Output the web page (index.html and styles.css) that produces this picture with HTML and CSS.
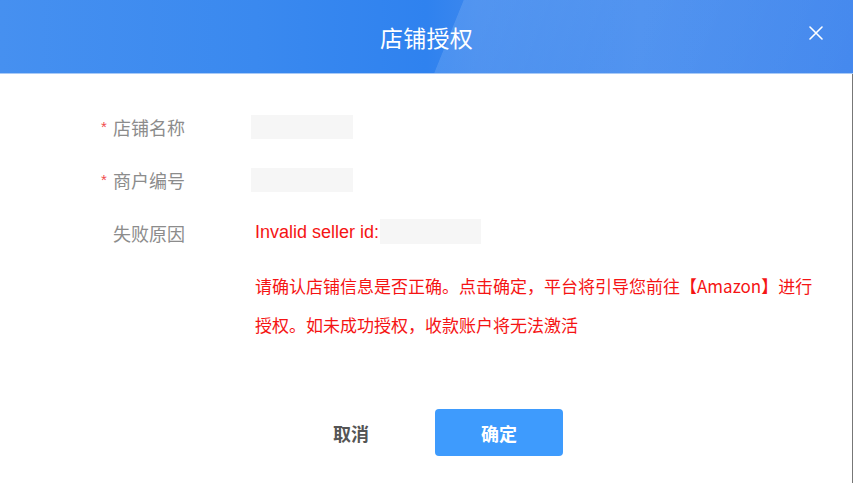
FILE: index.html
```html
<!DOCTYPE html>
<html lang="zh">
<head>
<meta charset="utf-8">
<title>店铺授权</title>
<link rel="stylesheet" href="styles.css">
</head>
<body>
<div class="dialog">
  <header class="dialog-header">
    <h1 class="dialog-title">店铺授权</h1>
    <button class="close-btn" aria-label="关闭">
      <svg width="14" height="14" viewBox="0 0 14 14"><path d="M1 1L13 13M13 1L1 13" stroke="#fff" stroke-width="1.6" fill="none" stroke-linecap="round"/></svg>
    </button>
  </header>
  <div class="dialog-body">
    <div class="form-row">
      <div class="form-label required">店铺名称</div>
      <div class="form-value"><div class="mask"></div></div>
    </div>
    <div class="form-row">
      <div class="form-label required">商户编号</div>
      <div class="form-value"><div class="mask"></div></div>
    </div>
    <div class="form-row">
      <div class="form-label">失败原因</div>
      <div class="form-value error-line"><span class="error-text">Invalid seller id:</span><div class="mask mask-id"></div></div>
    </div>
    <p class="notice">请确认店铺信息是否正确。点击确定，平台将引导您前往【Amazon】进行授权。如未成功授权，收款账户将无法激活</p>
  </div>
  <footer class="dialog-footer">
    <button class="btn btn-cancel">取消</button>
    <button class="btn btn-primary">确定</button>
  </footer>
</div>
</body>
</html>
```
FILE: styles.css
```css
html, body {
  margin: 0;
  padding: 0;
  background: #fff;
}
body {
  font-family: "Noto Sans CJK SC", "Liberation Sans", sans-serif;
}
.dialog {
  width: 853px;
  height: 483px;
  display: flex;
  flex-direction: column;
  background: #fff;
}
.dialog-header {
  position: relative;
  height: 73px;
  flex: none;
  display: flex;
  align-items: center;
  justify-content: center;
  border-bottom: 1px solid #a9caf6;
  background:
    linear-gradient(112deg, rgba(255,255,255,0) 0, rgba(255,255,255,0) 52.5%, rgba(255,255,255,0.12) 52.6%, rgba(255,255,255,0.05) 70%, rgba(255,255,255,0) 100%),
    linear-gradient(90deg, #4690f0 0%, #3a89ef 30%, #2f82ef 50%, #3c87ee 56%, #4a8fef 75%, #4589ee 100%);
}
.dialog-title {
  margin: 0;
  color: #fff;
  font-size: 23px;
  font-weight: 400;
  letter-spacing: 0.3px;
}
.close-btn {
  position: absolute;
  right: 30px;
  top: 26px;
  width: 14px;
  height: 14px;
  padding: 0;
  border: 0;
  background: none;
  line-height: 0;
}
.dialog-body {
  flex: 1;
  padding: 41px 0 0 0;
  border-right: 1px solid #777;
  width: 852px;
}
.form-row {
  display: flex;
  align-items: center;
  height: 24px;
  margin-bottom: 29px;
}
.form-label {
  position: relative;
  width: 138px;
  padding-left: 113px;
  font-size: 18px;
  color: #8c8c8c;
  line-height: 24px;
}
.form-label.required::before {
  content: "*";
  position: absolute;
  left: 101px;
  top: 0;
  color: #f04b4b;
  font-size: 15px;
  font-family: "Liberation Sans", sans-serif;
}
.form-value {
  display: flex;
  align-items: center;
}
.mask {
  width: 102px;
  height: 24px;
  background: #f6f6f6;
}
.error-line {
  padding-left: 4px;
  margin-top: -4px;
}
.error-text {
  font-family: "Liberation Sans", Arial, sans-serif;
  font-size: 18px;
  color: #f51414;
  margin-top: 3px;
}
.mask-id {
  width: 101px;
  height: 25px;
  margin-left: 1px;
}
.notice {
  margin: -8px 0 0 255px;
  width: 568px;
  font-size: 17px;
  line-height: 39px;
  color: #f51414;
}
.dialog-footer {
  flex: none;
  height: 74px;
  display: flex;
  justify-content: center;
  align-items: flex-start;
  gap: 20px;
  padding-right: 2px;
  border-right: 1px solid #777;
  width: 850px;
}
.btn {
  width: 128px;
  height: 47px;
  border: 0;
  border-radius: 4px;
  font-family: "Noto Sans CJK SC", sans-serif;
  font-size: 18px;
  font-weight: 700;
}
.btn-cancel {
  background: #fff;
  color: #555;
}
.btn-primary {
  background: #3e9bfd;
  color: #fff;
}
```
